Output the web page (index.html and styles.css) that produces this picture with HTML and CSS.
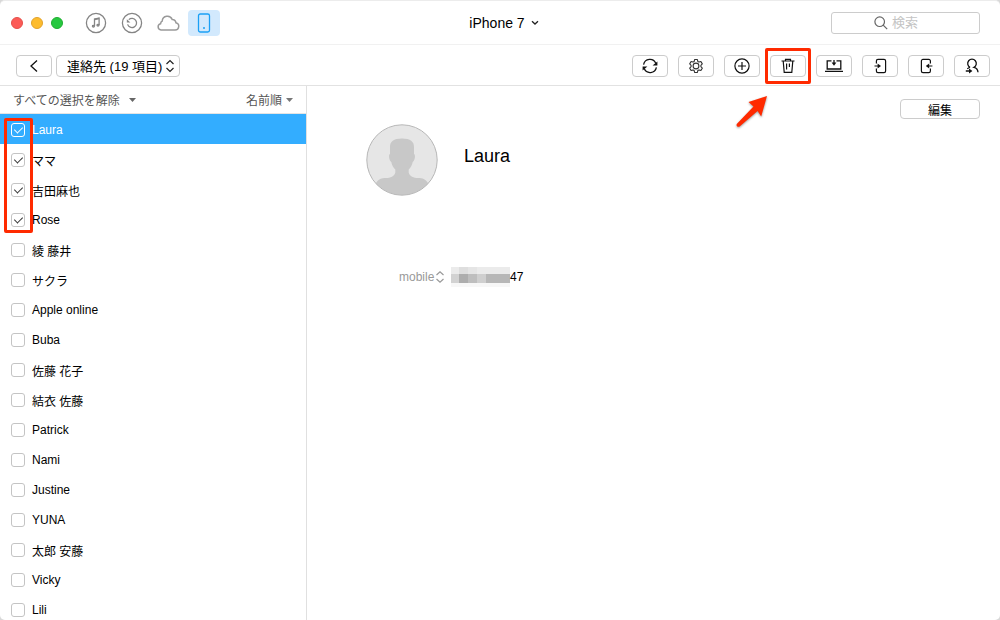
FILE: index.html
```html
<!DOCTYPE html>
<html lang="ja">
<head>
    <meta charset="UTF-8">
    <meta name="viewport" content="width=device-width, initial-scale=1.0">
    <title>iPhone 7 - 連絡先</title>
    <link rel="stylesheet" href="styles.css">
</head>
<body>
    <div class="window">
        <!-- Title bar -->
        <header class="titlebar">
            <div class="titlebar-left">
                <div class="lights">
                    <button class="light light-close" aria-label="閉じる"></button>
                    <button class="light light-min" aria-label="最小化"></button>
                    <button class="light light-max" aria-label="拡大"></button>
                </div>
                <nav class="tabs">
                    <button class="tab" aria-label="ミュージック">
                        <svg width="22" height="22" viewBox="0 0 22 22" fill="none" stroke="#858585" stroke-width="1.3">
                            <circle cx="11" cy="11" r="9.6"/>
                            <path d="M9.5 14V7l4.6-1v7"/>
                            <path d="M9.5 7.5l4.6-1"/>
                            <ellipse cx="8.4" cy="14.2" rx="1" ry="0.8"/>
                            <ellipse cx="13" cy="13.2" rx="1" ry="0.8"/>
                        </svg>
                    </button>
                    <button class="tab" aria-label="バックアップ">
                        <svg width="22" height="22" viewBox="0 0 22 22" fill="none" stroke="#858585" stroke-width="1.3">
                            <circle cx="11" cy="11" r="9.6"/>
                            <path d="M7.8 7.6A4.6 4.6 0 1 1 6.6 12.4"/>
                            <path d="M5.8 7.2v3.400h3.600z" fill="#858585" stroke="none"/>
                        </svg>
                    </button>
                    <button class="tab" aria-label="iCloud">
                        <svg width="24" height="18" viewBox="0 0 24 18" fill="none" stroke="#999" stroke-width="1.5">
                            <path d="M5 16h14a3.700 3.700 0 0 0 .9-7.300 3.400 3.400 0 0 0-3.700-3.200A5.200 5.200 0 0 0 6.200 7a3.200 3.200 0 0 0-1.600 2.700A3.200 3.200 0 0 0 5 16z"/>
                        </svg>
                    </button>
                    <button class="tab active" aria-label="デバイス">
                        <svg width="14" height="20" viewBox="0 0 14 20" fill="none" stroke="#1ba0f5" stroke-width="1.3">
                            <rect x="1.5" y="1" width="11" height="18" rx="1.8"/>
                            <circle cx="7" cy="15" r="1" fill="#1ba0f5" stroke="none"/>
                        </svg>
                    </button>
                </nav>
            </div>
            <button class="device-name">
                iPhone 7
                <svg width="8" height="6" viewBox="0 0 8 6" fill="none" stroke="#222" stroke-width="1.3"><path d="M1 1.2l3 2.8 3-2.8"/></svg>
            </button>
            <label class="search">
                <svg width="14" height="14" viewBox="0 0 14 14" fill="none" stroke="#666" stroke-width="1.2"><circle cx="5.7" cy="5.7" r="4.8"/><path d="M9.2 9.2l4 4"/></svg>
                <input type="search" placeholder="検索" aria-label="検索">
            </label>
        </header>

        <!-- Toolbar -->
        <div class="toolbar">
            <button class="tool" aria-label="戻る">
                <svg width="10" height="14" viewBox="0 0 10 14" fill="none" stroke="#111" stroke-width="1.3"><path d="M8 1.5L2 7l6 5.5"/></svg>
            </button>
            <div class="dropdown category">
                <select aria-label="カテゴリ">
                    <option>連絡先 (19 項目)</option>
                </select>
                <svg width="10" height="14" viewBox="0 0 10 14" fill="none" stroke="#222" stroke-width="1.2"><path d="M1.5 5L5 1.5 8.5 5M1.5 9L5 12.5 8.5 9"/></svg>
            </div>
            <div class="tools">
                <button class="tool" aria-label="更新">
                    <svg width="16" height="16" viewBox="0 0 16 16" fill="none" stroke="#111" stroke-width="1.3">
                        <path d="M1.6 6.6A6.4 6.4 0 0 1 13.8 5.400M14.4 9.400A6.4 6.4 0 0 1 2.200 10.600"/>
                        <path d="M15.400 3.600v3.800h-4.800zM.6 12.400V8.600h4.800z" fill="#111" stroke="none"/>
                    </svg>
                </button>
                <button class="tool" aria-label="設定">
                    <svg width="16" height="16" viewBox="0 0 16 16" fill="none" stroke="#333" stroke-width="1.1" stroke-linejoin="round">
                        <path d="M6.6 1.500h2.800l.4 1.900 1.200.7 1.900-.6 1.400 2.400L12.900 7.300v1.400l1.400 1.400-1.400 2.400-1.900-.6-1.200.7-.4 1.900H6.600l-.4-1.900-1.200-.7-1.900.6-1.400-2.400 1.400-1.400V7.300L1.700 5.900l1.400-2.400 1.900.6 1.200-.7z"/>
                        <circle cx="8" cy="8" r="2.900"/>
                    </svg>
                </button>
                <button class="tool" aria-label="追加">
                    <svg width="16" height="16" viewBox="0 0 16 16" fill="none" stroke="#111" stroke-width="1.2"><circle cx="8" cy="8" r="7.1"/><path d="M8 4v8M4 8h8"/></svg>
                </button>
                <div class="marked">
                    <button class="tool" aria-label="削除">
                        <svg width="16" height="16" viewBox="0 0 16 16" fill="none" stroke="#111" stroke-width="1.2">
                            <path d="M1.5 3h13M5.500 3V1.300h5V3M3.200 3l1 11.400h7.600l1-11.400M6.600 5.400v6M9.400 5.400v3.600"/>
                        </svg>
                    </button>
                    <span class="mark mark-delete"></span>
                    <svg class="arrow" width="34" height="34" viewBox="0 0 34 34">
                        <path d="M32 1L13.500 7l5 4.600L2 28.800c-1.400 1.800.8 4 2.600 2.600L22.600 16l3.600 5.400z" fill="#ff2a00"/>
                    </svg>
                </div>
                <button class="tool" aria-label="Macへ転送">
                    <svg width="20" height="16" viewBox="0 0 20 16" fill="none" stroke="#111" stroke-width="1.3">
                        <path d="M7.500 2.800H3.200V11h13.600V2.800h-4.300M1 13.400h18M10 2v4"/>
                        <path d="M7.600 4.600h4.800L10 7.800z" fill="#111" stroke="none"/>
                    </svg>
                </button>
                <button class="tool" aria-label="デバイスへ転送">
                    <svg width="16" height="16" viewBox="0 0 16 16" fill="none" stroke="#111" stroke-width="1.2">
                        <path d="M4.4 5.4V3a1.6 1.6 0 0 1 1.6-1.6h6A1.6 1.6 0 0 1 13.6 3v10a1.6 1.6 0 0 1-1.6 1.6H6A1.6 1.6 0 0 1 4.4 13v-2.4M2.500 8h4"/>
                        <path d="M5.600 5.600v4.800L9 8z" fill="#111" stroke="none"/>
                    </svg>
                </button>
                <button class="tool" aria-label="エクスポート">
                    <svg width="16" height="16" viewBox="0 0 16 16" fill="none" stroke="#111" stroke-width="1.2">
                        <path d="M12.400 5.400V3a1.6 1.6 0 0 0-1.6-1.6H5A1.6 1.6 0 0 0 3.4 3v10A1.6 1.6 0 0 0 5 14.6h5.8a1.6 1.6 0 0 0 1.6-1.6v-2.4M14.400 8h-5"/>
                        <path d="M11.200 5.600v4.800L7.800 8z" fill="#111" stroke="none"/>
                    </svg>
                </button>
                <button class="tool" aria-label="連絡先へ">
                    <svg width="16" height="16" viewBox="0 0 16 16" fill="none" stroke="#111" stroke-width="1.3">
                        <path d="M6 9.300A4.300 4.300 0 1 1 10 9.300c2.500.5 3.800 2 4 5M6 9.300l-2.800 1.500M1.800 13h4"/>
                        <path d="M5 10.600v4.800L8.400 13z" fill="#111" stroke="none"/>
                    </svg>
                </button>
            </div>
        </div>

        <main class="content">
            <!-- Contact list -->
            <aside class="sidebar">
                <div class="list-header">
                    <div class="dropdown filter">
                        <select aria-label="選択">
                            <option>すべての選択を解除</option>
                        </select>
                        <svg width="7" height="4" viewBox="0 0 7 4"><path d="M0 0h7L3.5 4z" fill="#666"/></svg>
                    </div>
                    <div class="dropdown filter">
                        <select aria-label="並べ替え">
                            <option>名前順</option>
                        </select>
                        <svg width="7" height="4" viewBox="0 0 7 4"><path d="M0 0h7L3.5 4z" fill="#777"/></svg>
                    </div>
                </div>
                <div class="list">
                    <label class="contact selected"><input type="checkbox" checked>Laura</label>
                    <label class="contact"><input type="checkbox" checked>ママ</label>
                    <label class="contact"><input type="checkbox" checked>吉田麻也</label>
                    <label class="contact"><input type="checkbox" checked>Rose</label>
                    <label class="contact"><input type="checkbox">綾 藤井</label>
                    <label class="contact"><input type="checkbox">サクラ</label>
                    <label class="contact"><input type="checkbox">Apple online</label>
                    <label class="contact"><input type="checkbox">Buba</label>
                    <label class="contact"><input type="checkbox">佐藤 花子</label>
                    <label class="contact"><input type="checkbox">結衣 佐藤</label>
                    <label class="contact"><input type="checkbox">Patrick</label>
                    <label class="contact"><input type="checkbox">Nami</label>
                    <label class="contact"><input type="checkbox">Justine</label>
                    <label class="contact"><input type="checkbox">YUNA</label>
                    <label class="contact"><input type="checkbox">太郎 安藤</label>
                    <label class="contact"><input type="checkbox">Vicky</label>
                    <label class="contact"><input type="checkbox">Lili</label>
                    <span class="mark mark-checks"></span>
                </div>
            </aside>

            <!-- Contact detail -->
            <section class="detail">
                <div class="detail-actions">
                    <button class="edit">編集</button>
                </div>
                <div class="profile">
                    <svg class="avatar" width="72" height="72" viewBox="0 0 72 72">
                        <defs><clipPath id="face"><circle cx="36" cy="36" r="35"/></clipPath></defs>
                        <circle cx="36" cy="36" r="35" fill="#e6e6e6"/>
                        <path clip-path="url(#face)" fill="#c8c8c8" d="M36 14.500c8.500 0 12 3 12 8.500v7c1.600.4 1.200 6-1.300 8-.6 3.500-2 5.500-4 7.500v3c1 4 5 5.500 9.300 5.500 4.500 0 7.500 1 10 5V73H10V59c2.500-4 5.500-5 10-5 4.300 0 8.300-1.500 9.300-5.500v-3c-2-2-3.400-4-4-7.500-2.500-2-2.900-7.600-1.300-8v-7c0-5.500 3.500-8.500 12-8.500z"/>
                        <circle cx="36" cy="36" r="35.200" fill="none" stroke="#b5b5b5"/>
                    </svg>
                    <h1>Laura</h1>
                </div>
                <div class="field">
                    <div class="dropdown kind">
                        <select aria-label="電話の種類">
                            <option>mobile</option>
                        </select>
                        <svg width="10" height="14" viewBox="0 0 10 14" fill="none" stroke="#999" stroke-width="1.2"><path d="M1.5 5L5 1.8 8.5 5M1.5 9L5 12.2 8.5 9"/></svg>
                    </div>
                    <svg class="masked" width="59" height="20" viewBox="0 0 59 20" shape-rendering="crispEdges">
                        <path fill="#ebebeb" d="M0 0h59v7H0z"/>
                        <path fill="#dedede" d="M8 0h9v7H8z"/>
                        <path fill="#e5e5e5" d="M17 0h9v7h-9z"/>
                        <path fill="#d2d2d2" d="M0 7h8v9H0z"/>
                        <path fill="#adadad" d="M8 7h9v9H8z"/>
                        <path fill="#bebebe" d="M17 7h9v9h-9z"/>
                        <path fill="#cfcfcf" d="M26 7h9v9h-9z"/>
                        <path fill="#b7b7b7" d="M35 7h24v9H35z"/>
                        <path fill="#f7f7f7" d="M0 16h59v4H0z"/>
                    </svg>
                    <span class="number">47</span>
                </div>
            </section>
        </main>
    </div>
</body>
</html>
```
FILE: styles.css
```css
* {
    box-sizing: border-box;
    margin: 0;
    padding: 0;
}

body {
    font-family: "Liberation Sans", "Noto Sans CJK JP", sans-serif;
    font-size: 12px;
    color: #000;
    background: #d8d8d8;
}

button,
select,
input {
    font: inherit;
    color: inherit;
}

button {
    display: flex;
    align-items: center;
    justify-content: center;
    background: none;
    border: none;
}

svg {
    display: block;
    flex: none;
}

.window {
    display: flex;
    flex-direction: column;
    height: 100vh;
    background: #fff;
    border-top: 1px solid #ececec;
    border-radius: 5px;
    overflow: hidden;
}

/* Title bar */
.titlebar {
    display: grid;
    grid-template-columns: 1fr auto 1fr;
    align-items: center;
    height: 44px;
    flex: none;
    padding: 0 20px 0 11px;
    border-bottom: 1px solid #f1f1f1;
}

.titlebar-left {
    display: flex;
    align-items: center;
    gap: 17px;
}

.lights {
    display: flex;
    gap: 8px;
}

.light {
    width: 12px;
    height: 12px;
    border-radius: 50%;
}

.light-close {
    background: #fc5b57;
    border: 1px solid #e5504a;
}

.light-min {
    background: #fdbc2e;
    border: 1px solid #e2a32c;
}

.light-max {
    background: #27c840;
    border: 1px solid #1fae30;
}

.tabs {
    display: flex;
    gap: 4px;
}

.tab {
    width: 32px;
    height: 26px;
    border-radius: 4px;
}

.tab.active {
    background: #d2e9fd;
}

.device-name {
    gap: 6px;
    padding-left: 17px;
    font-size: 14px;
}

.search {
    display: flex;
    align-items: center;
    justify-self: end;
    gap: 4px;
    width: 149px;
    height: 22px;
    padding-left: 42px;
    border: 1px solid #ccc;
    border-radius: 3px;
}

.search input {
    width: 80px;
    font-size: 13px;
    border: none;
    outline: none;
    background: none;
}

.search input::placeholder {
    color: #c4c4c4;
}

/* Toolbar */
.toolbar {
    display: flex;
    align-items: center;
    gap: 4px;
    height: 41px;
    flex: none;
    padding: 2px 10px 0 16px;
    border-bottom: 1px solid #e2e2e2;
}

.tools {
    display: flex;
    gap: 10px;
    margin-left: auto;
}

.tool {
    width: 36px;
    height: 22px;
    border: 1px solid #ccc;
    border-radius: 4px;
}

.dropdown {
    position: relative;
}

.dropdown select {
    display: block;
    appearance: none;
    background: none;
    border: none;
    outline: none;
}

.dropdown svg {
    position: absolute;
    top: 0;
    bottom: 0;
    right: 0;
    margin: auto 0;
    pointer-events: none;
}

.category select {
    height: 22px;
    padding: 0 16px 0 10px;
    font-size: 13px;
    border: 1px solid #ccc;
    border-radius: 4px;
}

.category svg {
    right: 5px;
}

/* Red highlights */
.marked {
    position: relative;
}

.mark {
    position: absolute;
    border: 3px solid #ff2a00;
    border-radius: 2px;
    pointer-events: none;
}

.mark-delete {
    top: -7px;
    left: -5px;
    width: 46px;
    height: 36px;
}

.mark-checks {
    top: 4px;
    left: 4px;
    width: 29px;
    height: 115px;
}

.arrow {
    position: absolute;
    top: 40px;
    left: -35px;
    filter: drop-shadow(0 1px 1px rgba(0, 0, 0, 0.4));
    pointer-events: none;
}

/* Contact list */
.content {
    display: flex;
    flex: 1;
    min-height: 0;
}

.sidebar {
    width: 307px;
    flex: none;
    border-right: 1px solid #e0e0e0;
    overflow: hidden;
}

.list-header {
    display: flex;
    justify-content: space-between;
    height: 28px;
    padding: 1px 13px 0 13px;
    border-bottom: 1px solid #e4e4e4;
}

.filter select {
    height: 28px;
    padding-right: 10px;
    color: #555;
}

.filter:first-child select {
    padding-right: 14px;
}

.list {
    position: relative;
}

.contact {
    display: flex;
    align-items: center;
    gap: 7px;
    height: 30px;
    padding: 2px 11px 0;
}

.contact input {
    display: flex;
    justify-content: center;
    appearance: none;
    width: 14px;
    height: 14px;
    background: #fff;
    border: 1px solid #c4c4c4;
    border-radius: 3px;
}

.contact input:checked::after {
    content: "";
    width: 4px;
    height: 7px;
    margin-top: 1px;
    border: solid #333;
    border-width: 0 1px 1px 0;
    transform: rotate(45deg);
}

.contact.selected {
    color: #fff;
    background: #33adff;
}

.contact.selected input {
    background: none;
    border-color: #fff;
}

.contact.selected input:checked::after {
    border-color: #fff;
}

/* Contact detail */
.detail {
    flex: 1;
    padding: 13px 20px;
}

.detail-actions {
    display: flex;
    justify-content: flex-end;
}

.edit {
    width: 80px;
    height: 20px;
    border: 1px solid #ccc;
    border-radius: 4px;
}

.profile {
    display: flex;
    gap: 26px;
    padding: 5px 0 0 39px;
}

.profile h1 {
    padding-top: 20px;
    font-size: 18px;
    font-weight: normal;
    line-height: 24px;
}

.field {
    display: flex;
    align-items: center;
    padding: 71px 0 0 72px;
}

.kind select {
    height: 20px;
    padding-right: 10px;
    color: #999;
}

.masked {
    margin-left: 6px;
}
```
